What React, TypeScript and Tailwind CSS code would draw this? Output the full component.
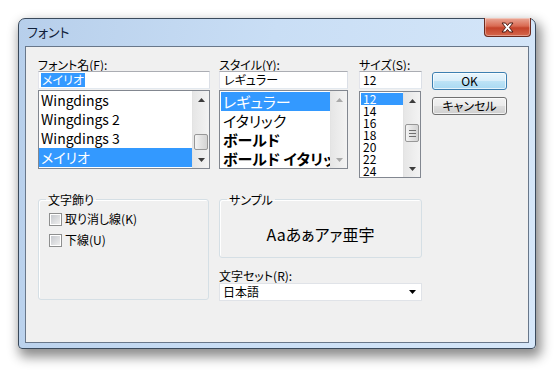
import React from "react";

const Tri = ({ up, color = "#3c3c3c" }: { up?: boolean; color?: string }) => (
  <svg width="7" height="4" viewBox="0 0 7 4">
    <path d={up ? "M0 4 L3.5 0 L7 4Z" : "M0 0 L7 0 L3.5 4Z"} fill={color} />
  </svg>
);

const Thumb = ({ h, grip }: { h: number; grip?: boolean }) => (
  <div
    className="mx-[1px] rounded-[2px] border border-[#979797] bg-[linear-gradient(90deg,#f4f4f4,#e2e2e2_50%,#d4d4d4)] flex items-center justify-center"
    style={{ height: h }}
  >
    {grip && (
      <div className="flex flex-col gap-[2px]">
        <div className="w-[7px] h-[1px] bg-[#6f6f6f]" />
        <div className="w-[7px] h-[1px] bg-[#6f6f6f]" />
        <div className="w-[7px] h-[1px] bg-[#6f6f6f]" />
      </div>
    )}
  </div>
);

const ScrollBar = ({
  thumbTop,
  thumbH,
  grip,
  disabled,
}: {
  thumbTop?: number;
  thumbH?: number;
  grip?: boolean;
  disabled?: boolean;
}) => {
  const c = disabled ? "#a9a9a9" : "#3c3c3c";
  return (
    <div className="w-[17px] h-full flex flex-col bg-[linear-gradient(90deg,#e6e6e6,#f3f3f3)] border-l border-[#e3e3e3]">
      <div className="h-[17px] flex items-center justify-center shrink-0">
        <Tri up color={c} />
      </div>
      <div className="flex-1 flex flex-col">
        {thumbH !== undefined && (
          <>
            <div style={{ height: thumbTop }} />
            <Thumb h={thumbH} grip={grip} />
          </>
        )}
      </div>
      <div className="h-[17px] flex items-center justify-center shrink-0">
        <Tri color={c} />
      </div>
    </div>
  );
};

const Input = ({ children }: { children: React.ReactNode }) => (
  <div className="h-[18px] bg-white border border-[#abadb3] border-l-[#e2e3ea] border-r-[#dbdfe6] border-b-[#e3e9ef] flex items-center pl-[2px] text-[12px] leading-[14px] text-black">
    {children}
  </div>
);

const CheckBox = ({ label }: { label: string }) => (
  <div className="flex items-center gap-[3px] h-[14px]">
    <div className="w-[13px] h-[13px] border border-[#8e8f8f] p-[1px] bg-white">
      <div className="w-full h-full bg-[linear-gradient(135deg,#c6c9ce,#eeeeee)]" />
    </div>
    <span className="text-[12px] leading-[14px]">{label}</span>
  </div>
);

const CloseGlyph = () => (
  <svg width="13" height="11" viewBox="0 0 13 11">
    <path
      d="M1 1 H4.5 L6.5 3.6 L8.5 1 H12 L8.4 5.5 L12 10 H8.5 L6.5 7.4 L4.5 10 H1 L4.6 5.5Z"
      fill="#ffffff"
      stroke="#4a1a12"
      strokeWidth="1"
      strokeLinejoin="round"
    />
  </svg>
);

export default function App() {
  const fonts = ["Wingdings", "Wingdings 2", "Wingdings 3", "メイリオ"];
  const styles = [
    { t: "レギュラー", b: false },
    { t: "イタリック", b: false },
    { t: "ボールド", b: true },
    { t: "ボールド イタリック", b: true },
  ];
  const sizes = ["12", "14", "16", "18", "20", "22", "24"];

  return (
    <div className="w-[557px] h-[371px] bg-white pt-[18px] pl-[18px] font-['Noto_Sans_CJK_JP',sans-serif] [font-feature-settings:'palt'] text-black">
      <div className="w-[518px] rounded-t-[7px] rounded-b-[4px] border border-[#3a4a5c] bg-[linear-gradient(100deg,#b7cfeb,#c9def5_45%,#d6e7f9)] shadow-[3px_6px_12px_2px_rgba(0,0,0,0.45)] px-[6px] pb-[5px]">
        {/* Title bar */}
        <div className="h-[27px] flex items-start">
          <div className="text-[13px] leading-[15px] pt-[5px] pl-[2px] text-[#10203a]">フォント</div>
          <div className="ml-auto -mt-[1px] mr-[-2px] w-[47px] h-[19px] rounded-b-[4px] border border-[#6b2a1e] border-t-0 bg-[linear-gradient(180deg,#eaa897,#d96a52_45%,#c4432a_55%,#d5674c)] flex items-center justify-center shadow-[inset_0_0_0_1px_rgba(255,255,255,0.35)]">
            <CloseGlyph />
          </div>
        </div>

        {/* Client area */}
        <div className="h-[297px] bg-[#f0f0f0] border border-[#68778a] pt-[11px] pl-[12px]">
          {/* Top row */}
          <div className="flex items-start">
            {/* Font name */}
            <div className="w-[172px] flex flex-col">
              <div className="text-[12px] leading-[13px] h-[13px]">フォント名(F):</div>
              <Input>
                <span className="bg-[#3399ff] text-white px-[1px]">メイリオ</span>
              </Input>
              <div className="mt-[1px] h-[79px] bg-white border border-[#828790] flex">
                <div className="flex-1 flex flex-col overflow-hidden">
                  {fonts.map((f, i) => (
                    <div
                      key={f}
                      className={`h-[19px] shrink-0 pl-[2px] text-[14px] leading-[19px] whitespace-nowrap ${
                        i === 3 ? "bg-[#3399ff] text-white" : ""
                      }`}
                    >
                      {f}
                    </div>
                  ))}
                </div>
                <ScrollBar thumbTop={26} thumbH={16} />
              </div>
            </div>

            {/* Style */}
            <div className="ml-[9px] w-[129px] flex flex-col">
              <div className="text-[12px] leading-[13px] h-[13px]">スタイル(Y):</div>
              <Input>
                <span className="pl-[2px]">レギュラー</span>
              </Input>
              <div className="mt-[1px] h-[79px] bg-white border border-[#828790] flex">
                <div className="flex-1 flex flex-col overflow-hidden pt-[1px] pl-[1px]">
                  {styles.map((s, i) => (
                    <div
                      key={s.t}
                      className={`h-[19px] shrink-0 pl-[2px] text-[15px] leading-[19px] whitespace-nowrap overflow-hidden ${
                        s.b ? "font-bold" : ""
                      } ${i === 0 ? "bg-[#3399ff] text-white" : ""}`}
                    >
                      {s.t}
                    </div>
                  ))}
                </div>
                <ScrollBar disabled />
              </div>
            </div>

            {/* Size */}
            <div className="ml-[11px] w-[63px] flex flex-col">
              <div className="text-[12px] leading-[13px] h-[13px] whitespace-nowrap">サイズ(S):</div>
              <Input>
                <span className="pl-[1px]">12</span>
              </Input>
              <div className="mt-[2px] w-[62px] h-[87px] bg-white border border-[#828790] flex">
                <div className="flex-1 flex flex-col overflow-hidden pt-[1px] pl-[1px]">
                  {sizes.map((s, i) => (
                    <div
                      key={s}
                      className={`h-[12px] shrink-0 pl-[2px] text-[12px] leading-[12px] ${
                        i === 0 ? "bg-[#3399ff] text-white" : ""
                      }`}
                    >
                      {s}
                    </div>
                  ))}
                </div>
                <ScrollBar thumbTop={15} thumbH={18} grip />
              </div>
            </div>

            {/* Buttons */}
            <div className="ml-[10px] w-[75px] flex flex-col">
              <div className="mt-[14px] h-[18px] rounded-[3px] border border-[#3c7fb1] bg-[linear-gradient(180deg,#e9f5fc,#d9eefa_48%,#bde3f6_52%,#a9d9f2)] shadow-[inset_0_0_0_1px_rgba(255,255,255,0.7)] flex items-center justify-center text-[12px] leading-[14px]">
                OK
              </div>
              <div className="mt-[7px] h-[18px] rounded-[3px] border border-[#707070] bg-[linear-gradient(180deg,#f2f2f2,#ebebeb_48%,#dddddd_52%,#cfcfcf)] shadow-[inset_0_0_0_1px_rgba(255,255,255,0.7)] flex items-center justify-center text-[12px] leading-[14px]">
                キャンセル
              </div>
            </div>
          </div>

          {/* Bottom row */}
          <div className="mt-[15px] flex items-start">
            <fieldset className="w-[171px] h-[107px] border border-[#d5dfe5] rounded-[3px] shadow-[inset_1px_1px_0_#ffffff]">
              <legend className="ml-[7px] px-[2px] text-[12px] leading-[13px]">文字飾り</legend>
              <div className="pl-[10px] pt-[6px] flex flex-col gap-[7px]">
                <CheckBox label="取り消し線(K)" />
                <CheckBox label="下線(U)" />
              </div>
            </fieldset>

            <div className="ml-[10px] w-[203px] flex flex-col">
              <fieldset className="h-[65px] border border-[#d5dfe5] rounded-[3px] shadow-[inset_1px_1px_0_#ffffff]">
                <legend className="ml-[7px] px-[2px] text-[12px] leading-[13px]">サンプル</legend>
                <div className="h-[50px] flex items-center justify-center pt-[6px] text-[16px] leading-[18px]">
                  Aaあぁアァ亜宇
                </div>
              </fieldset>
              <div className="mt-[11px] text-[12px] leading-[13px] h-[13px]">文字セット(R):</div>
              <div className="mt-[1px] h-[18px] bg-white border border-[#e0e3e8] flex items-center pl-[3px] pr-[5px] text-[12px] leading-[14px]">
                <span>日本語</span>
                <span className="ml-auto">
                  <Tri color="#000" />
                </span>
              </div>
            </div>
          </div>
        </div>
      </div>
    </div>
  );
}
